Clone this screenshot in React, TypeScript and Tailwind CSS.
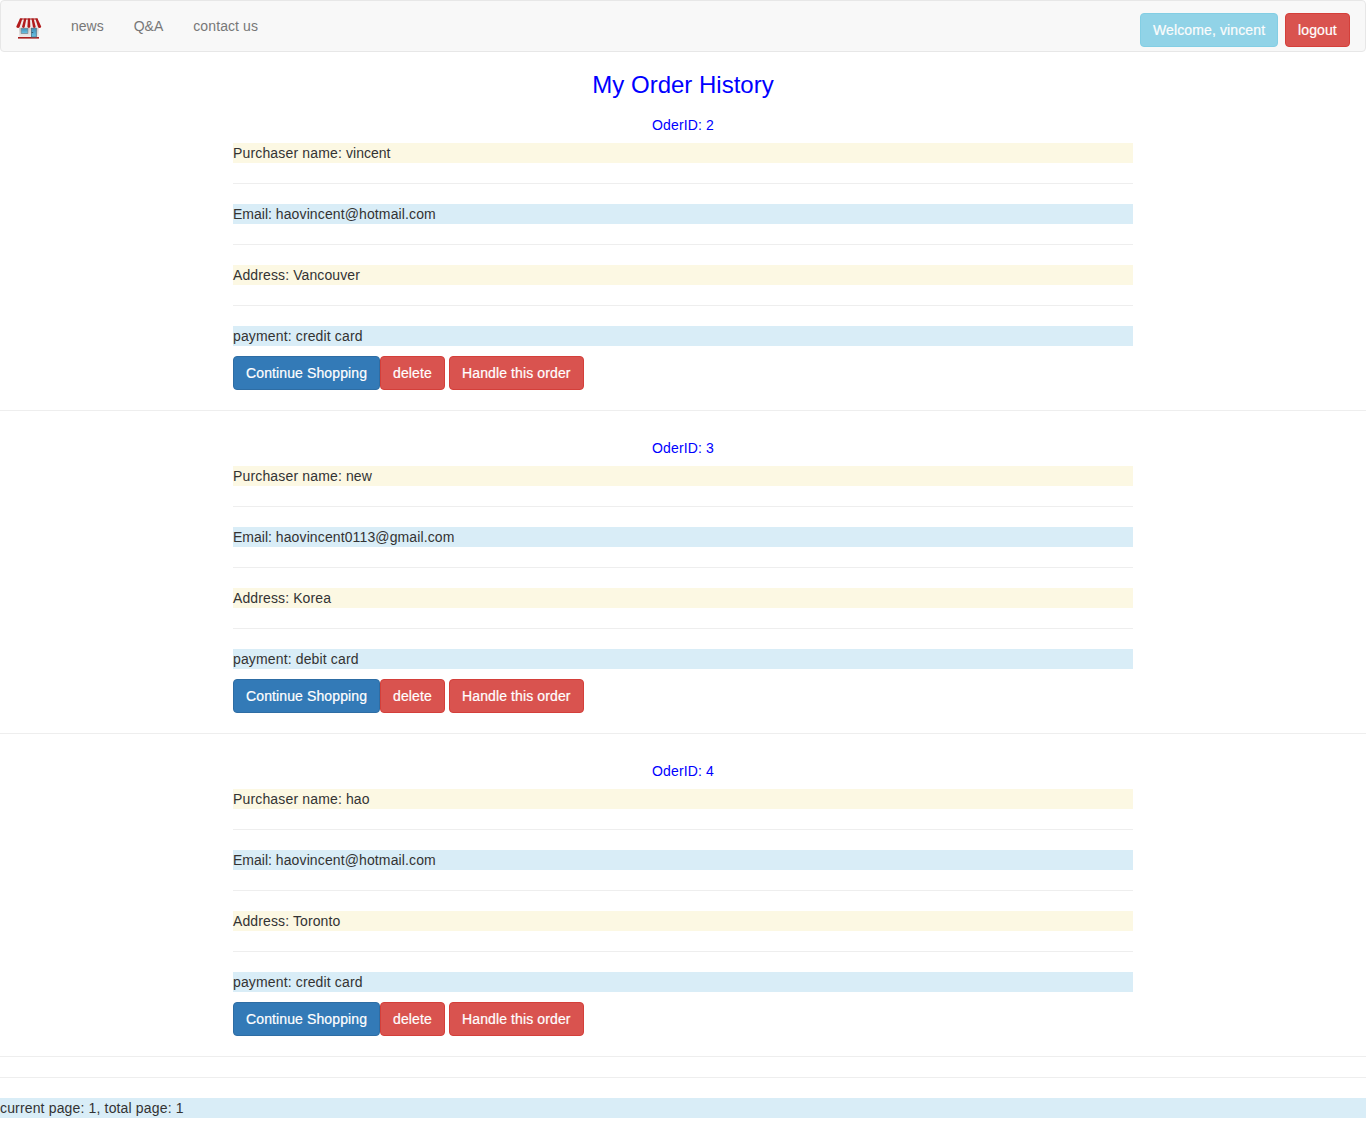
import type { ReactNode } from "react";

type Order = { id: number; name: string; email: string; address: string; payment: string };

const orders: Order[] = [
  { id: 2, name: "vincent", email: "haovincent@hotmail.com", address: "Vancouver", payment: "credit card" },
  { id: 3, name: "new", email: "haovincent0113@gmail.com", address: "Korea", payment: "debit card" },
  { id: 4, name: "hao", email: "haovincent@hotmail.com", address: "Toronto", payment: "credit card" },
];

function ShopIcon() {
  return (
    <svg width="26" height="22" viewBox="0 0 26 22" className="block">
      <defs>
        <linearGradient id="glass" x1="0" y1="0" x2="0" y2="1">
          <stop offset="0" stopColor="#3f8fb8" />
          <stop offset="1" stopColor="#6cc3e4" />
        </linearGradient>
        <linearGradient id="wall" x1="0" y1="0" x2="0" y2="1">
          <stop offset="0" stopColor="#c9c5c4" />
          <stop offset="1" stopColor="#efeded" />
        </linearGradient>
      </defs>
      <rect x="3" y="8" width="19.6" height="11.5" fill="url(#wall)" />
      <rect x="2" y="19" width="21" height="1.6" fill="#a8201f" />
      <path d="M4 .4h17.5L25.2 8.6q-.2 1.3-1.5 1.3H2Q.3 9.9.3 8.6z" fill="#f1eceb" />
      <path d="M4 .4h2.4L3.6 9q-.4 1-1.6 1Q.3 10 .3 8.6zM8.2.4h2.2L8.7 9q-.3.9-1.4.9T6 8.8zM11.9.4H14l.3 8.4q-.1 1.1-1.4 1.1t-1.5-1.1zM15.5.4h2.1l2.1 8.4q0 1.1-1.2 1.1T16.9 9zM19.3.4h2.2l3.7 8.2q0 1.4-1.5 1.4T22 9z" fill="#b21b1c" />
      <path d="M4 .4h17.5l.4 1.1H3.6z" fill="#a91b1c" />
      <rect x="5.1" y="10.2" width="6.8" height="5.4" fill="url(#glass)" stroke="#7b8589" strokeWidth=".7" />
      <rect x="15.4" y="10.2" width="4.9" height="8.8" fill="url(#glass)" stroke="#4f7488" strokeWidth=".8" />
      <path d="M15.6 14.5h1.6" stroke="#32576a" />
    </svg>
  );
}

const tones = {
  primary: "border-[#2e6da4] bg-[#337ab7]",
  danger: "border-[#d43f3a] bg-[#d9534f]",
  info: "border-[#46b8da] bg-[#5bc0de] opacity-65",
};

function Button({ tone, width, children }: { tone: keyof typeof tones; width: string; children: ReactNode }) {
  return (
    <button className={`h-[34px] shrink-0 rounded border pl-3 text-left tracking-[0.12px] whitespace-nowrap text-white [-webkit-text-stroke:0.2px_white] ${width} ${tones[tone]}`}>
      {children}
    </button>
  );
}

function Rule() {
  return <hr className="my-5 border-t border-[#eee]" />;
}

function OrderCard({ order }: { order: Order }) {
  return (
    <>
      <section className="mx-auto w-[900px]">
        <h4 className="mb-2 text-center tracking-[0.15px] text-[blue]">OderID: {order.id}</h4>
        <p className="bg-[#fcf8e3]"><span className="tracking-[0.16px]">Purchaser name: </span>{order.name}</p>
        <Rule />
        <p className="bg-[#d9edf7]">Email: <span className="tracking-[0.12px]">{order.email}</span></p>
        <Rule />
        <p className="bg-[#fcf8e3] tracking-[0.11px]">Address: {order.address}</p>
        <Rule />
        <p className="mb-2.5 bg-[#d9edf7] tracking-[0.14px]">payment: {order.payment}</p>
        <div className="flex">
          <Button tone="primary" width="w-[147px]">Continue Shopping</Button>
          <Button tone="danger" width="w-[65px] mr-1">delete</Button>
          <Button tone="danger" width="w-[135px]">Handle this order</Button>
        </div>
      </section>
      <hr className="mt-5 border-t border-[#eee]" />
    </>
  );
}

export default function App() {
  return (
    <div className="min-h-[1128px] bg-white font-['Liberation_Sans',Arial,sans-serif] text-[14px] leading-5 text-[#333]">
      <nav className="flex h-[52px] items-start rounded border border-[#e7e7e7] bg-[#f8f8f8] px-[15px]">
        <div className="mt-[17px] mr-[29px]"><ShopIcon /></div>
        <ul className="mt-[15px] flex gap-[30px] text-[#777]">
          <li>news</li>
          <li>Q&amp;A</li>
          <li className="tracking-[0.1px]">contact us</li>
        </ul>
        <div className="mt-3 ml-auto flex gap-[7px]">
          <Button tone="info" width="w-[138px]">Welcome, vincent</Button>
          <Button tone="danger" width="w-[65px]">logout</Button>
        </div>
      </nav>
      <h3 className="mt-5 mb-[17px] text-center text-[24px] leading-[26px] text-[blue]">My Order History</h3>
      <main className="flex flex-col gap-[27px]">
        {orders.map((order) => (
          <div key={order.id}><OrderCard order={order} /></div>
        ))}
      </main>
      <Rule />
      <footer className="bg-[#d9edf7] tracking-[0.155px]">current page: 1, total page: 1</footer>
    </div>
  );
}
